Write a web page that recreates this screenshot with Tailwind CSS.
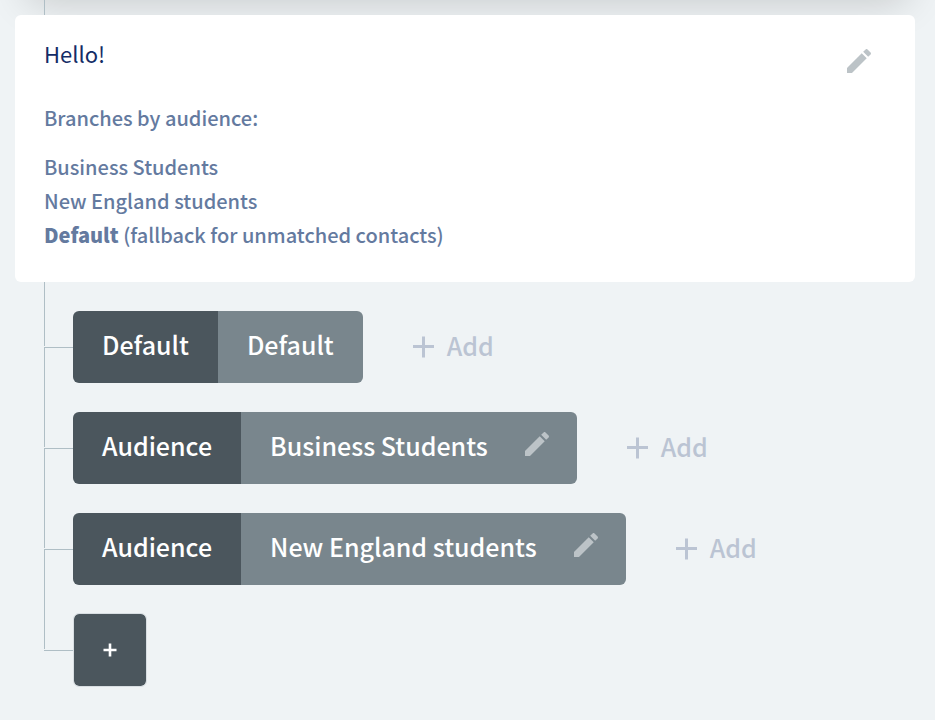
<!DOCTYPE html>
<html lang="en">
<head>
    <meta charset="UTF-8">
    <meta name="viewport" content="width=device-width, initial-scale=1.0">
    <title>Message branches</title>
    <script src="https://cdn.jsdelivr.net/npm/@tailwindcss/browser@4"></script>
</head>
<body class="min-h-screen flex flex-col bg-[#eff3f5] font-['Noto_Sans_CJK_SC',sans-serif]">
    <svg class="hidden">
        <symbol id="pencil" viewBox="0 0 24 24">
            <path d="M3 17.25V21h3.75L17.81 9.94l-3.75-3.75L3 17.25zM20.71 7.04c.39-.39.39-1.02 0-1.41l-2.34-2.34c-.39-.39-1.02-.39-1.41 0l-1.83 1.83 3.75 3.75 1.83-1.83z"/>
        </symbol>
        <symbol id="plus" viewBox="0 0 22 22">
            <path d="M10.5 0.5v21M0 10.5h21" fill="none" stroke="currentColor" stroke-width="3"/>
        </symbol>
    </svg>

    <!-- Bottom edge of the previous step -->
    <div class="h-10 -mt-10 mx-7 shadow-[0_0_40px_rgba(0,0,0,0.2)]"></div>
    <div class="h-[15px] ml-11 border-l border-[#afbec5]"></div>

    <main class="pr-5">
        <!-- Message card -->
        <section class="relative flex items-start justify-between ml-[15px] rounded-md bg-white pl-[29px] pr-10 pt-[22px] pb-[30px] text-[20px] font-medium text-[#647a9f]">
            <div>
                <h1 class="text-[22px] leading-8 font-normal text-[#142c66]">Hello!</h1>
                <p class="mt-[33px] leading-8">Branches by audience:</p>
                <ul class="mt-4 leading-[34px]">
                    <li>Business Students</li>
                    <li>New England students</li>
                    <li><strong class="font-black">Default</strong> (fallback for unmatched contacts)</li>
                </ul>
            </div>
            <button type="button" aria-label="Edit message" class="mt-2 text-[#bcc3c7]">
                <svg class="size-8 fill-current"><use href="#pencil"/></svg>
            </button>
        </section>

        <!-- Branches -->
        <ul class="ml-11 text-[25px] font-medium">
            <li class="flex">
                <div class="w-[29px] flex flex-col gap-px">
                    <div class="h-16 border-l border-[#afbec5]"></div>
                    <div class="flex-1 border-l border-t border-[#afbec5]"></div>
                </div>
                <div class="mt-[29px] h-[72px] flex rounded-md overflow-hidden text-white">
                    <span class="flex items-center px-[29px] pb-1 bg-[#4b565d]">Default</span>
                    <span class="flex items-center px-[29px] pb-1 bg-[#79868d]">Default</span>
                </div>
                <button type="button" class="mt-[29px] ml-[50px] flex items-center gap-3 text-[#bbc4d3]">
                    <svg class="size-[22px]"><use href="#plus"/></svg>
                    <span class="pb-0.5">Add</span>
                </button>
            </li>
            <li class="flex">
                <div class="w-[29px] flex flex-col gap-px">
                    <div class="h-16 border-l border-[#afbec5]"></div>
                    <div class="flex-1 border-l border-t border-[#afbec5]"></div>
                </div>
                <div class="mt-[29px] h-[72px] flex rounded-md overflow-hidden text-white">
                    <span class="flex items-center px-[29px] pb-1 bg-[#4b565d]">Audience</span>
                    <span class="flex items-center gap-[33px] pl-[29px] pr-6 pb-1 bg-[#79868d]">
                        Business Students
                        <button type="button" aria-label="Edit Business Students" class="mb-1 text-[#bcc3c7]">
                            <svg class="size-8 fill-current"><use href="#pencil"/></svg>
                        </button>
                    </span>
                </div>
                <button type="button" class="mt-[29px] ml-[50px] flex items-center gap-3 text-[#bbc4d3]">
                    <svg class="size-[22px]"><use href="#plus"/></svg>
                    <span class="pb-0.5">Add</span>
                </button>
            </li>
            <li class="flex">
                <div class="w-[29px] flex flex-col gap-px">
                    <div class="h-16 border-l border-[#afbec5]"></div>
                    <div class="flex-1 border-l border-t border-[#afbec5]"></div>
                </div>
                <div class="mt-[29px] h-[72px] flex rounded-md overflow-hidden text-white">
                    <span class="flex items-center px-[29px] pb-1 bg-[#4b565d]">Audience</span>
                    <span class="flex items-center gap-[33px] pl-[29px] pr-6 pb-1 bg-[#79868d]">
                        New England students
                        <button type="button" aria-label="Edit New England students" class="mb-1 text-[#bcc3c7]">
                            <svg class="size-8 fill-current"><use href="#pencil"/></svg>
                        </button>
                    </span>
                </div>
                <button type="button" class="mt-[29px] ml-[50px] flex items-center gap-3 text-[#bbc4d3]">
                    <svg class="size-[22px]"><use href="#plus"/></svg>
                    <span class="pb-0.5">Add</span>
                </button>
            </li>
            <li class="flex">
                <div class="w-[29px] flex flex-col gap-px">
                    <div class="h-16 border-l border-[#afbec5]"></div>
                    <div class="flex-1 border-t border-[#afbec5]"></div>
                </div>
                <button type="button" aria-label="Add branch" class="mt-7 size-[74px] flex items-center justify-center rounded-md border border-[#d8dee2] bg-[#4b565d] bg-clip-padding text-white">
                    <svg class="size-[14px]" viewBox="0 0 14 14"><path d="M7 0.5v13M0.5 7h13" stroke="currentColor" stroke-width="2.6"/></svg>
                </button>
            </li>
        </ul>
    </main>
</body>
</html>
